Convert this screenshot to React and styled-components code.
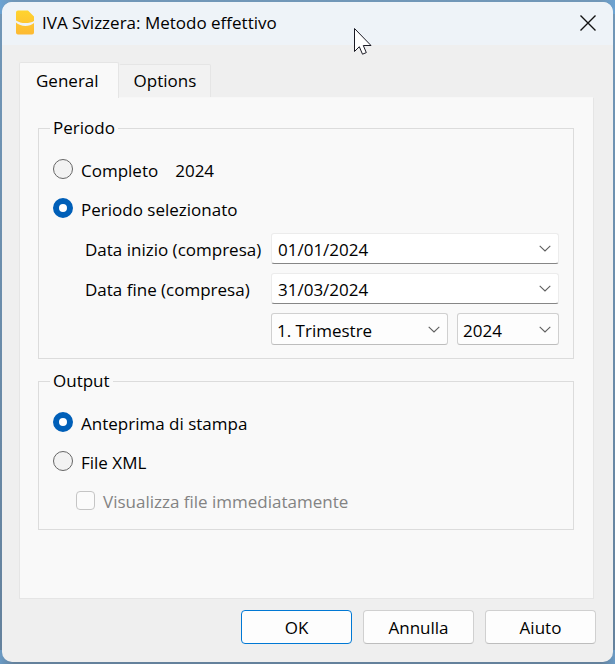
import React, { useState } from "react";
import styled, { createGlobalStyle } from "styled-components";

const GlobalStyle = createGlobalStyle`
  *, *::before, *::after { box-sizing: border-box; }
  body { margin: 0; }
  body, button, input, select {
    font-family: "Open Sans", "Noto Sans", sans-serif;
    font-size: 17px;
    line-height: 24px;
    color: #000;
  }
`;

const Desktop = styled.div`
  min-height: 100vh;
  padding: 2px;
  display: flex;
  background:
    linear-gradient(90deg, #6ba3d3, transparent 14px, transparent calc(100% - 14px), #6ba3d3) top / 100% 14px no-repeat,
    linear-gradient(90deg, #6a9ac4, transparent 14px, transparent calc(100% - 14px), #6a9ac4) bottom / 100% 14px no-repeat,
    linear-gradient(#7197b8, #64819c);
`;

const Dialog = styled.main`
  position: relative;
  flex: 1;
  min-width: 0;
  display: flex;
  flex-direction: column;
  overflow: hidden;
  border-radius: 10px;
  background: #efefef;
`;

const TitleBar = styled.header`
  height: 43px;
  padding: 0 15px 2px 13px;
  display: flex;
  align-items: center;
  gap: 8px;
  background: #eef3f8;
`;

const Title = styled.h1`
  flex: 1;
  margin: 0;
  font-size: 17px;
  font-weight: 400;
  line-height: 24px;
  white-space: nowrap;
`;

const CloseButton = styled.button`
  width: 20px;
  height: 20px;
  padding: 0;
  display: grid;
  place-items: center;
  border: 0;
  background: none;
`;

const Content = styled.div`
  flex: 1;
  padding: 17px 17px 18px;
  display: flex;
  flex-direction: column;
`;

const TabList = styled.div`
  display: flex;
  align-items: flex-end;
`;

const Tab = styled.button`
  height: ${(p) => (p.$active ? 36 : 33)}px;
  margin-bottom: ${(p) => (p.$active ? -1 : 0)}px;
  padding: ${(p) => (p.$active ? "0 19px 0 16px" : "0 14px")};
  border: 1px solid #e5e5e5;
  border-left-color: ${(p) => (p.$active ? "#e5e5e5" : "transparent")};
  border-bottom: 0;
  border-radius: 2px 2px 0 0;
  background: ${(p) => (p.$active ? "#f9f9f9" : "#f2f2f2")};
  white-space: nowrap;
  z-index: 1;
`;

const Panel = styled.section`
  flex: 1;
  margin-right: 2px;
  padding: 18px 19px 18px 18px;
  display: flex;
  flex-direction: column;
  gap: 10px;
  border: 1px solid #e5e5e5;
  border-top-color: #f7f7f7;
  background: #f9f9f9;
`;

const Group = styled.fieldset`
  min-width: 0;
  margin: 0;
  padding: 18px 14px ${(p) => (p.$roomy ? 16 : 13)}px;
  border: 1px solid #dcdcdc;
`;

const Legend = styled.legend`
  margin-left: -3px;
  padding: 0 3px;
`;

const Stack = styled.div`
  display: flex;
  flex-direction: column;
  align-items: flex-start;
  gap: 15px;
`;

const Choice = styled.label`
  display: flex;
  align-items: center;
  gap: 8px;
  margin-left: ${(p) => (p.$nested ? 23 : 0)}px;
  color: ${(p) => (p.$muted ? "#838383" : "#000")};
  white-space: nowrap;
`;

const ChoiceText = styled.span`
  padding-top: 1px;
  margin-bottom: -1px;
`;

const Radio = styled.input`
  appearance: none;
  flex: none;
  width: 20px;
  height: 20px;
  margin: 0 0 2px;
  border: 1px solid #666;
  border-radius: 50%;
  background: #f2f2f2;

  &:checked {
    border: 6px solid #005fb8;
    background: #fff;
  }
`;

const Checkbox = styled.input`
  appearance: none;
  flex: none;
  width: 19px;
  height: 19px;
  margin: 0 0 2px;
  border: 1px solid #c5c5c5;
  border-radius: 4px;
  background: #fbfbfb;
`;

const Year = styled(ChoiceText)`
  margin-left: 9px;
`;

const PeriodGrid = styled.div`
  margin-top: 12px;
  padding-left: 32px;
  display: grid;
  grid-template-columns: 176px 1fr;
  column-gap: 10px;
  row-gap: 9px;
  align-items: center;
`;

const FieldLabel = styled.label`
  padding-top: 2px;
  white-space: nowrap;
`;

const DateBox = styled.div`
  height: 31px;
  display: flex;
  border: 1px solid #ececec;
  border-bottom-color: #868686;
  border-radius: 3px;
  background: #fff;
`;

const DateInput = styled.input`
  flex: 1;
  min-width: 0;
  padding: 2px 6px 0;
  border: 0;
  outline: 0;
  background: none;
`;

const DropButton = styled.button`
  width: 26px;
  padding: 0;
  display: grid;
  place-items: center;
  border: 0;
  background: none;
`;

const PairRow = styled.div`
  grid-column: 2;
  display: grid;
  grid-template-columns: 177fr 102fr;
  gap: 9px;
`;

const SelectWrap = styled.div`
  display: grid;
  align-items: center;

  > * { grid-area: 1 / 1; }
  > svg { justify-self: end; margin-right: 8px; pointer-events: none; }
`;

const Select = styled.select`
  appearance: none;
  width: 100%;
  height: 32px;
  padding: 3px 26px 0 5px;
  border: 1px solid #d0d0d0;
  border-bottom-color: #bdbdbd;
  border-radius: 3px;
  background: #fdfdfd;
`;

const Footer = styled.footer`
  margin-top: 11px;
  display: flex;
  justify-content: flex-end;
  gap: 11px;
`;

const PushButton = styled.button`
  width: 111px;
  height: 34px;
  padding: 1px 0 0;
  border: 1px solid ${(p) => (p.$primary ? "#0078d4" : "#d0d0d0")};
  border-bottom-color: ${(p) => (p.$primary ? "#0078d4" : "#bdbdbd")};
  border-radius: 4px;
  background: #fdfdfd;
`;

const Pointer = styled.svg`
  position: absolute;
  left: 351px;
  top: 25px;
  pointer-events: none;
`;

function AppIcon() {
  return (
    <svg width="19" height="25" viewBox="0 0 19 25" aria-hidden="true">
      <defs>
        <linearGradient id="icon-fill" x1="0" y1="0" x2="0" y2="1">
          <stop offset="0" stopColor="#ffd42f" />
          <stop offset="1" stopColor="#fdb933" />
        </linearGradient>
      </defs>
      <path
        d="M3 0.5H13L19 6.500V11C14.500 13.800 5.500 13.800 1 10.500V2.500Q1 0.500 3 0.500Z M1 12.500C5.500 17 14.500 17 19 13V22.500Q19 24.500 17 24.500H3Q1 24.500 1 22.500Z"
        fill="url(#icon-fill)"
      />
    </svg>
  );
}

function Chevron() {
  return (
    <svg width="12" height="7" viewBox="0 0 12 7" fill="none" aria-hidden="true">
      <path d="M0.7 0.8L6 6L11.300 0.8" stroke="#5f5f5f" strokeWidth="1.1" />
    </svg>
  );
}

function DateField({ id, value, onChange }) {
  return (
    <DateBox>
      <DateInput id={id} type="text" value={value} onChange={(e) => onChange(e.target.value)} />
      <DropButton type="button" aria-label="Calendario">
        <Chevron />
      </DropButton>
    </DateBox>
  );
}

function SelectField({ label, options }) {
  return (
    <SelectWrap>
      <Select aria-label={label}>
        {options.map((o) => (
          <option key={o}>{o}</option>
        ))}
      </Select>
      <Chevron />
    </SelectWrap>
  );
}

export default function App() {
  const [period, setPeriod] = useState("selected");
  const [output, setOutput] = useState("preview");
  const [start, setStart] = useState("01/01/2024");
  const [end, setEnd] = useState("31/03/2024");

  return (
    <Desktop>
      <GlobalStyle />
      <Dialog>
        <TitleBar>
          <AppIcon />
          <Title>IVA Svizzera: Metodo effettivo</Title>
          <CloseButton type="button" aria-label="Chiudi">
            <svg width="16" height="16" viewBox="0 0 16 16" aria-hidden="true">
              <path d="M0.500 0.500L15.500 15.500M15.500 0.500L0.500 15.500" stroke="#111" strokeWidth="1.4" />
            </svg>
          </CloseButton>
        </TitleBar>
        <Content>
          <TabList role="tablist">
            <Tab type="button" role="tab" aria-selected="true" $active>General</Tab>
            <Tab type="button" role="tab" aria-selected="false">Options</Tab>
          </TabList>
          <Panel role="tabpanel">
            <Group>
              <Legend>Periodo</Legend>
              <Stack>
                <Choice>
                  <Radio type="radio" name="period" checked={period === "all"} onChange={() => setPeriod("all")} />
                  <ChoiceText>Completo</ChoiceText>
                  <Year>2024</Year>
                </Choice>
                <Choice>
                  <Radio type="radio" name="period" checked={period === "selected"} onChange={() => setPeriod("selected")} />
                  <ChoiceText>Periodo selezionato</ChoiceText>
                </Choice>
              </Stack>
              <PeriodGrid>
                <FieldLabel htmlFor="start">Data inizio (compresa)</FieldLabel>
                <DateField id="start" value={start} onChange={setStart} />
                <FieldLabel htmlFor="end">Data fine (compresa)</FieldLabel>
                <DateField id="end" value={end} onChange={setEnd} />
                <PairRow>
                  <SelectField label="Trimestre" options={["1. Trimestre", "2. Trimestre", "3. Trimestre", "4. Trimestre"]} />
                  <SelectField label="Anno" options={["2024"]} />
                </PairRow>
              </PeriodGrid>
            </Group>
            <Group $roomy>
              <Legend>Output</Legend>
              <Stack>
                <Choice>
                  <Radio type="radio" name="output" checked={output === "preview"} onChange={() => setOutput("preview")} />
                  <ChoiceText>Anteprima di stampa</ChoiceText>
                </Choice>
                <Choice>
                  <Radio type="radio" name="output" checked={output === "xml"} onChange={() => setOutput("xml")} />
                  <ChoiceText>File XML</ChoiceText>
                </Choice>
                <Choice $nested $muted>
                  <Checkbox type="checkbox" disabled />
                  <ChoiceText>Visualizza file immediatamente</ChoiceText>
                </Choice>
              </Stack>
            </Group>
          </Panel>
          <Footer>
            <PushButton type="button" $primary>OK</PushButton>
            <PushButton type="button">Annulla</PushButton>
            <PushButton type="button">Aiuto</PushButton>
          </Footer>
        </Content>
        <Pointer width="20" height="30" viewBox="0 0 20 30" aria-hidden="true">
          <path
            d="M1.500 1.500V24.500L6.300 19.700L9.500 27.200L13.300 25.600L10.300 18.500H18Z"
            fill="#fff"
            stroke="#1a1a24"
            strokeWidth="1"
          />
        </Pointer>
      </Dialog>
    </Desktop>
  );
}
